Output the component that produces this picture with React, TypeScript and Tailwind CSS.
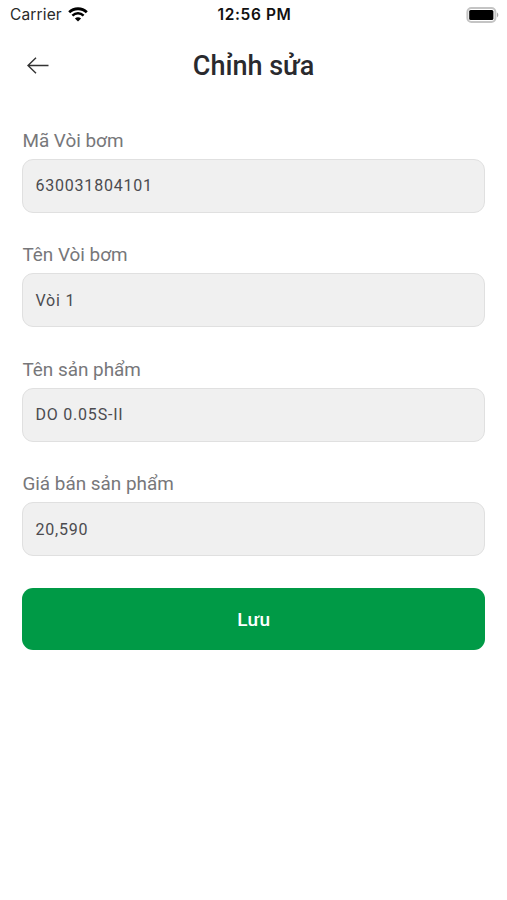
import React from 'react';

interface FieldProps {
  label: string;
  value: string;
}

const fields: FieldProps[] = [
  { label: 'Mã Vòi bơm', value: '630031804101' },
  { label: 'Tên Vòi bơm', value: 'Vòi 1' },
  { label: 'Tên sản phẩm', value: 'DO 0.05S-II' },
  { label: 'Giá bán sản phẩm', value: '20,590' },
];

const StatusBar: React.FC = () => (
  <div className="grid h-[30px] grid-cols-3 items-center pl-[10px] pr-2 font-['Inter',sans-serif] text-[#111]">
    <div className="flex items-center gap-[6px]">
      <span className="text-[15.5px] tracking-[0.15px] text-[#2a2a2a]">Carrier</span>
      <svg className="-mt-px" width="20" height="15" viewBox="0 0 20 15" fill="none">
        <path d="M1.2 5.2C6 .6 14 .6 18.8 5.2" stroke="#000" strokeWidth="2.8" />
        <path d="M4.4 8.6c3.2-3 8-3 11.2 0" stroke="#000" strokeWidth="2.5" />
        <path d="M10 14.6 6.9 11.4c1.7-1.6 4.5-1.6 6.2 0z" fill="#000" />
      </svg>
    </div>
    <span className="text-center text-[15.5px] font-semibold tracking-[0.6px]">12:56 PM</span>
    <svg className="-mt-px justify-self-end" width="33" height="16" viewBox="0 0 33 16" fill="none">
      <rect x="1.4" y="1" width="28" height="14" rx="4" stroke="#c4c4c4" strokeWidth="2" />
      <rect x="3.2" y="3" width="24.2" height="10" rx="1.5" fill="#000" />
      <path d="M31 5.6c1.8.8 1.8 4 0 4.8z" fill="#aaa" />
    </svg>
  </div>
);

const Field: React.FC<FieldProps> = ({ label, value }) => {
  return (
    <label className="block">
      <span className="block h-[28px] text-[18.9px] leading-[20px] text-[#77777a]">{label}</span>
      <input
        readOnly
        value={value}
        className="block h-[54px] w-full rounded-[11px] border border-[#e0e0e0] bg-[#f0f0f0] px-3 text-[16px] tracking-[0.8px] text-[#4b4b4f] outline-none"
      />
    </label>
  );
};

const App: React.FC = () => {
  return (
    <div className="min-h-screen bg-white font-['Roboto',sans-serif]">
      <StatusBar />
      <header className="grid h-[71px] grid-cols-[52px_1fr_52px] items-center">
        <button type="button" aria-label="Back" className="ml-[27px]">
          <svg width="22" height="18" viewBox="0 0 22 18" fill="none" stroke="#333" strokeWidth="1.4">
            <path d="M21.5 8.5H1M9 .8 1 8.5l8 7.8" />
          </svg>
        </button>
        <h1 className="pt-px text-center text-[27px] font-medium text-[#2a2a2e]">Chỉnh sửa</h1>
      </header>
      <main className="pl-[22.4px] pr-[21.6px] pt-[29.6px]">
        <div className="flex flex-col gap-[32.5px]">
          {fields.map((field) => (
            <Field key={field.label} {...field} />
          ))}
        </div>
        <button
          type="button"
          className="mt-8 block h-[62px] w-full rounded-[11px] bg-[#009a46] pt-0.5 text-[19px] font-medium tracking-[0.3px] text-white"
        >
          Lưu
        </button>
      </main>
    </div>
  );
};

export default App;
